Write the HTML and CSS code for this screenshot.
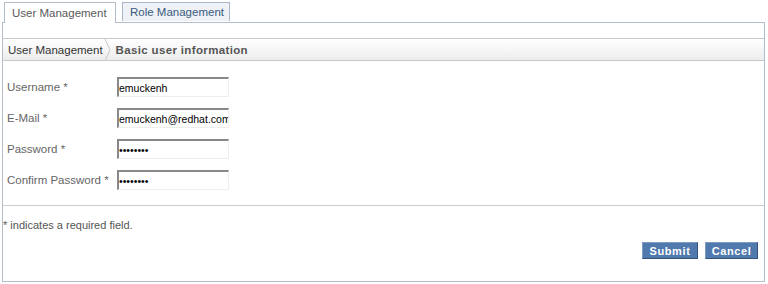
FILE: index.html
```html
<!DOCTYPE html>
<html>
<head>
<meta charset="utf-8">
<link rel="stylesheet" href="styles.css">
</head>
<body>
<div class="page">
  <div class="tabs">
    <div class="tab active">User Management</div>
    <div class="tab">Role Management</div>
  </div>
  <div class="panel">
    <div class="spacer"></div>
    <div class="crumbs">
      <span class="crumb">User Management</span>
      <svg class="chev" width="8" height="22" viewBox="0 0 8 22"><polyline points="1,0 6,11 1,22" fill="none" stroke="#c8c8c8" stroke-width="1"/></svg>
      <span class="crumb current">Basic user information</span>
    </div>
    <div class="form">
      <div class="row"><label class="lbl">Username *</label><input class="field" type="text" value="emuckenh"></div>
      <div class="row"><label class="lbl">E-Mail *</label><input class="field" type="text" value="emuckenh@redhat.com"></div>
      <div class="row"><label class="lbl">Password *</label><input class="field" type="password" value="password"></div>
      <div class="row"><label class="lbl">Confirm Password *</label><input class="field" type="password" value="password"></div>
    </div>
    <div class="footer">
      <div class="note">* indicates a required field.</div>
      <div class="buttons">
        <button class="btn submit">Submit</button>
        <button class="btn cancel">Cancel</button>
      </div>
    </div>
  </div>
</div>
</body>
</html>
```
FILE: styles.css
```css
html, body {
  margin: 0;
  padding: 0;
  background: #fff;
}
.page {
  width: 763px;
  margin-left: 2px;
  padding-top: 2px;
  font-family: "Liberation Sans", Arial, sans-serif;
}
.tabs {
  display: flex;
  align-items: flex-end;
  gap: 6px;
  padding-left: 2px;
  height: 20px;
  position: relative;
  z-index: 1;
}
.tab {
  box-sizing: border-box;
  height: 19px;
  width: 108px;
  white-space: nowrap;
  padding: 0 0 0 7px;
  border: 1px solid #a7b7c6;
  border-bottom: none;
  background: #eef1f5;
  color: #3a5a80;
  font-size: 11.5px;
  line-height: 18px;
  margin-bottom: 1px;
}
.tab.active {
  height: 21px;
  width: 112px;
  margin-bottom: -1px;
  background: #fff;
  color: #5a5a5a;
  padding: 1px 0 0 7px;
  line-height: 18px;
  border-color: #b4bec8;
}
.panel {
  box-sizing: border-box;
  height: 260px;
  border: 1px solid #b4bec8;
  display: flex;
  flex-direction: column;
}
.spacer {
  height: 15px;
}
.crumbs {
  box-sizing: border-box;
  height: 23px;
  border-top: 1px solid #c8c8c8;
  border-bottom: 1px solid #c8c8c8;
  background: linear-gradient(#ffffff, #f7f7f7 45%, #ececec);
  display: flex;
  align-items: center;
  padding-left: 5px;
  font-size: 11.5px;
}
.crumb {
  color: #333;
}
.crumb.current {
  font-weight: bold;
  font-size: 11.5px;
  letter-spacing: 0.35px;
  color: #555;
}
.chev {
  margin: 0 4px 0 1px;
  flex: none;
}
.form {
  display: flex;
  flex-direction: column;
  gap: 11px;
  padding: 16px 0 0 4px;
  height: 145px;
  box-sizing: border-box;
  border-bottom: 1px solid #c8ced4;
}
.row {
  display: flex;
  align-items: center;
  height: 20px;
}
.lbl {
  width: 110px;
  font-size: 11.5px;
  color: #666;
}
.field {
  box-sizing: border-box;
  width: 112px;
  height: 20px;
  margin: 0;
  padding: 0;
  border-style: solid;
  border-width: 2px 1px 1px 2px;
  border-color: #888 #eee #eee #888;
  font-family: "Liberation Sans", Arial, sans-serif;
  font-size: 10.5px;
  color: #000;
  background: #fff;
}
.footer {
  flex: 1;
  display: flex;
  flex-direction: column;
  padding: 13px 0 0 0;
}
.note {
  font-size: 11px;
  color: #555;
  height: 13px;
}
.buttons {
  display: flex;
  justify-content: flex-end;
  gap: 7px;
  padding-right: 6px;
  margin-top: 10px;
}
.btn {
  box-sizing: border-box;
  height: 17px;
  margin: 0;
  padding: 0;
  border: 1px solid #34527a;
  border-top-color: #7d9cc4;
  border-left-color: #7d9cc4;
  background: #5079ad;
  color: #fff;
  font-family: "Liberation Sans", Arial, sans-serif;
  font-weight: bold;
  font-size: 11px;
  letter-spacing: 0.6px;
  line-height: 14px;
}
.btn.submit { width: 56px; }
.btn.cancel { width: 53px; }
```
